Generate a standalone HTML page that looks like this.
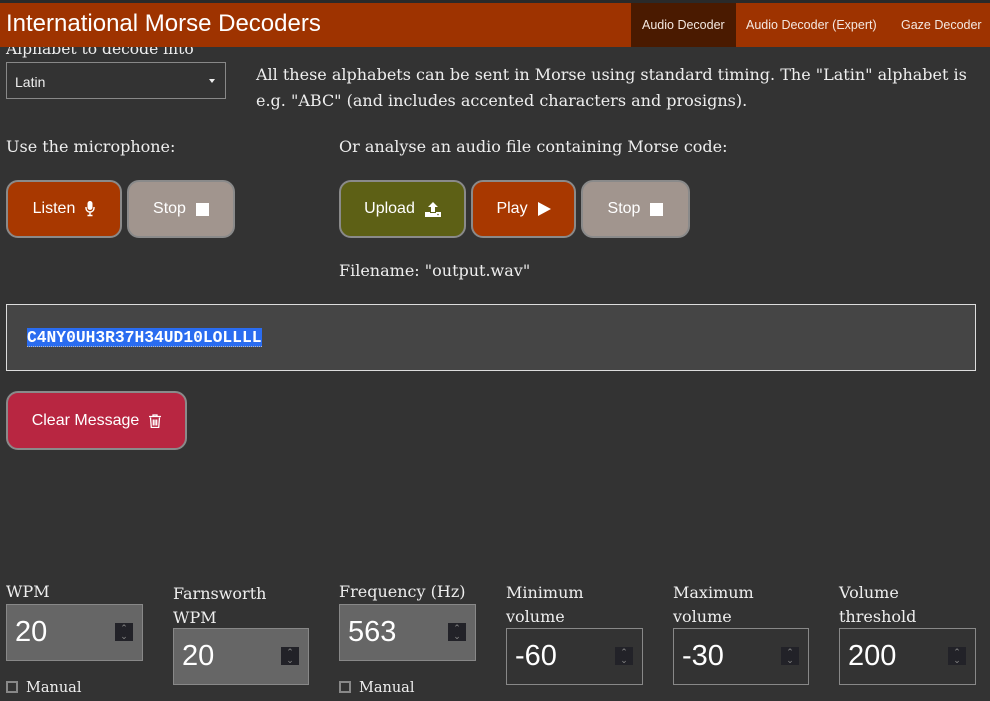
<!DOCTYPE html>
<html><head><meta charset="utf-8"><style>
*{box-sizing:border-box;margin:0;padding:0}
body{width:990px;height:701px;background:#333;overflow:hidden;position:relative;color:#eee;font-family:"DejaVu Serif","Liberation Serif",serif}
.a{position:absolute;white-space:nowrap}
.s{font-family:"Liberation Sans",sans-serif}
.serif{font-size:16px}
.btn{position:absolute;top:180px;height:58px;border:2px solid #8a8a8a;border-radius:12px;color:#fff;font-family:"Liberation Sans",sans-serif;font-size:16px;display:flex;align-items:center;justify-content:center;gap:10px}
.num{position:absolute;height:57px;border:1px solid #888;font-family:"Liberation Sans",sans-serif;font-size:29px;color:#fff;padding-left:8px;display:flex;align-items:center}
.spin{position:absolute;right:9px;top:18px;width:18px;height:18px;background:#222228;color:#888;font-size:9px;line-height:8px;text-align:center;padding-top:1px}
.cb{display:inline-block;width:12px;height:12px;border:2px solid #888;background:#333;margin-right:8px;vertical-align:-1px}
</style></head><body>
<div class="a" style="left:0;top:0;width:990px;height:3px;background:#2a2a2a"></div>
<div class="a serif" style="left:6px;top:40px;font-size:15.5px">Alphabet to decode into</div>
<div class="a" style="left:0;top:3px;width:990px;height:44px;background:#9e3300"></div>
<div class="a s" style="left:6px;top:10px;font-size:24px;color:#fff">International Morse Decoders</div>
<div class="a" style="left:631px;top:3px;width:105px;height:44px;background:#4a1a00"></div>
<div class="a s" style="left:642px;top:18px;font-size:12.5px;color:#f4e8e0">Audio Decoder</div>
<div class="a s" style="left:746px;top:18px;font-size:12.5px;color:#f4e8e0">Audio Decoder (Expert)</div>
<div class="a s" style="left:901px;top:18px;font-size:12.5px;color:#f4e8e0">Gaze Decoder</div>

<div class="a" style="left:6px;top:62px;width:220px;height:37px;border:1px solid #888"></div>
<div class="a s" style="left:15px;top:74px;font-size:14px">Latin</div>
<div class="a" style="left:209px;top:79px;border-left:3.5px solid transparent;border-right:3.5px solid transparent;border-top:4px solid #eee"></div>
<div class="a serif" style="left:256px;top:62px;line-height:26px">All these alphabets can be sent in Morse using standard timing. The "Latin" alphabet is<br>e.g. "ABC" (and includes accented characters and prosigns).</div>

<div class="a serif" style="left:6px;top:137px">Use the microphone:</div>
<div class="a serif" style="left:339px;top:137px">Or analyse an audio file containing Morse code:</div>

<div class="btn" style="left:6px;width:116px;background:#a83800">Listen <svg width="10" height="16" viewBox="0 0 10 16"><rect x="2.5" y="0" width="5" height="9" rx="2.5" fill="#fff"/><path d="M1 6v1a4 4 0 0 0 8 0V6M5 11v3M2.5 14.5h5" stroke="#fff" stroke-width="1.4" fill="none"/></svg></div>
<div class="btn" style="left:127px;width:108px;background:#a1958e">Stop <span style="width:13px;height:13px;background:#fff;display:inline-block"></span></div>
<div class="btn" style="left:339px;width:127px;background:#5d6015">Upload <svg width="16" height="15" viewBox="0 0 16 15"><path d="M8 0L3 5h3v5h4V5h3z" fill="#fff"/><path d="M0 10h5v1h6v-1h5v5H0z" fill="#fff"/><circle cx="13" cy="12.5" r=".8" fill="#5d6015"/></svg></div>
<div class="btn" style="left:471px;width:105px;background:#a83800">Play <svg width="13" height="14" viewBox="0 0 13 14"><path d="M0 0L13 7L0 14z" fill="#fff"/></svg></div>
<div class="btn" style="left:581px;width:109px;background:#a1958e">Stop <span style="width:13px;height:13px;background:#fff;display:inline-block"></span></div>

<div class="a serif" style="left:339px;top:261px">Filename: "output.wav"</div>

<div class="a" style="left:6px;top:304px;width:970px;height:67px;background:#454545;border:1px solid #ddd"></div>
<div class="a" style="left:27px;top:328px;height:19px;background:#2a6cf0;color:#fff;font-family:'Liberation Mono',monospace;font-weight:bold;font-size:16.3px;line-height:19px;border-bottom:1px dotted #bbb">C4NY0UH3R37H34UD10LOLLLL</div>

<div class="btn" style="left:6px;top:391px;width:181px;height:59px;background:#b82641">Clear Message <svg width="12" height="14" viewBox="0 0 12 14"><path d="M0 2.5h12M4 2.5V1h4v1.5M1.5 3.5l.8 10h7.4l.8-10M4.3 5.5v6M6 5.5v6M7.7 5.5v6" stroke="#fff" stroke-width="1.3" fill="none"/></svg></div>

<div class="a serif" style="left:6px;top:582px">WPM</div>
<div class="num" style="left:6px;top:604px;width:137px;background:#666">20<div class="spin">⌃<br>⌄</div></div>
<div class="a serif" style="left:6px;top:680px;font-size:14.5px"><span class="cb"></span>Manual</div>

<div class="a serif" style="left:173px;top:582px;line-height:24px">Farnsworth<br>WPM</div>
<div class="num" style="left:173px;top:628px;width:136px;background:#666">20<div class="spin">⌃<br>⌄</div></div>

<div class="a serif" style="left:339px;top:582px">Frequency (Hz)</div>
<div class="num" style="left:339px;top:604px;width:137px;background:#666">563<div class="spin">⌃<br>⌄</div></div>
<div class="a serif" style="left:339px;top:680px;font-size:14.5px"><span class="cb"></span>Manual</div>

<div class="a serif" style="left:506px;top:581px;line-height:24px">Minimum<br>volume</div>
<div class="num" style="left:506px;top:628px;width:137px">-60<div class="spin">⌃<br>⌄</div></div>
<div class="a serif" style="left:673px;top:581px;line-height:24px">Maximum<br>volume</div>
<div class="num" style="left:673px;top:628px;width:136px">-30<div class="spin">⌃<br>⌄</div></div>
<div class="a serif" style="left:839px;top:581px;line-height:24px">Volume<br>threshold</div>
<div class="num" style="left:839px;top:628px;width:137px">200<div class="spin">⌃<br>⌄</div></div>
</body></html>
